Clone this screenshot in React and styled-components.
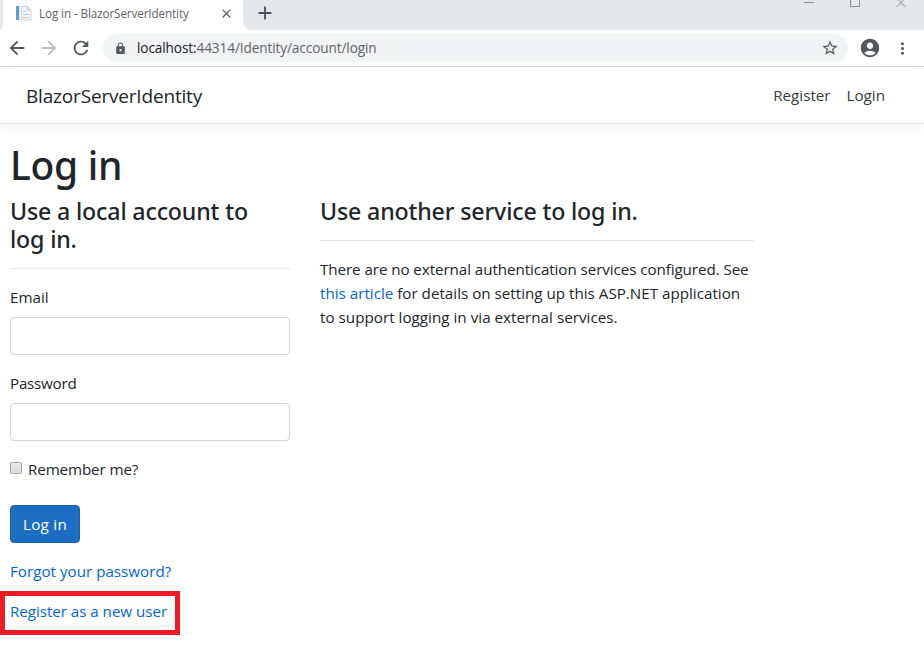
import React from 'react';
import styled, { createGlobalStyle } from 'styled-components';
import {
  MdArrowBack,
  MdArrowForward,
  MdRefresh,
  MdLock,
  MdStarBorder,
  MdAccountCircle,
  MdMoreVert,
  MdClose,
  MdAdd,
} from 'react-icons/md';

const GlobalStyle = createGlobalStyle`
  * { box-sizing: border-box; }
  body {
    margin: 0;
    background: #fff;
    color: #212529;
    font-family: "Open Sans", "Noto Sans", sans-serif;
    font-size: 15.2px;
    line-height: 24px;
    overflow: hidden;
  }
  svg { display: block; flex: none; }
`;

const Window = styled.div`
  display: flex;
  flex-direction: column;
  width: 924px;
  height: 649px;
  overflow: hidden;
`;

const TabStrip = styled.div`
  display: flex;
  height: 30px;
  background: #e4e8eb;
`;

const TabEdge = styled.div`
  width: ${(p) => (p.$side === 'left' ? 3 : 8)}px;
  background: #fff;

  &::after {
    content: '';
    display: block;
    height: 100%;
    background: #e4e8eb;
    border-radius: ${(p) => (p.$side === 'left' ? '0 0 3px 0 / 0 0 8px 0' : '0 0 0 8px')};
  }
`;

const Tab = styled.div`
  display: flex;
  align-items: center;
  width: 240px;
  padding: 0 9px 4px 12px;
  background: #fff;
  color: #5f6368;
`;

const TabTitle = styled.span`
  flex: 1;
  margin-left: 6px;
  font-size: 11.7px;
  letter-spacing: -0.11px;
  line-height: 16px;
  white-space: nowrap;
`;

const NewTab = styled.div`
  display: flex;
  align-items: center;
  padding: 0 0 4px 3px;
  color: #4d5156;
`;

const WindowControls = styled.div`
  display: flex;
  gap: 36px;
  margin: 0 18px 0 auto;
  height: 8px;
`;

const Toolbar = styled.div`
  display: flex;
  align-items: center;
  height: 37px;
  padding: 0 12px 0 6px;
  border-bottom: 1px solid #d8dadc;
  color: #54585d;
`;

const NavIcon = styled.span`
  width: 32px;
  color: ${(p) => (p.$disabled ? '#babcbe' : '#54585d')};
`;

const AddressBar = styled.div`
  display: flex;
  align-items: center;
  width: 745px;
  height: 28px;
  margin: 0 11px 0 1px;
  padding: 0 9px 0 11px;
  border-radius: 14px;
  background: #f1f3f4;
`;

const Url = styled.span`
  flex: 1;
  margin-left: 10px;
  font-size: 13.6px;
  letter-spacing: -0.1px;
  color: #5f6368;
`;

const Host = styled.span`
  color: #202124;
`;

const MenuIcon = styled.span`
  margin-left: 12px;
`;

const SiteHeader = styled.header`
  display: flex;
  align-items: center;
  height: 57px;
  padding: 0 39px 1px 26px;
  border-bottom: 1px solid #dee2e6;
  box-shadow: 0 4px 12px rgba(0, 0, 0, 0.05);
`;

const Brand = styled.a`
  flex: 1;
  padding-top: 2px;
  font-size: 19px;
  letter-spacing: -0.18px;
`;

const HeaderLink = styled.a`
  margin-left: 16px;
  color: #343a40;
`;

const Main = styled.main`
  padding: 17px 0 0 10px;
`;

const Title = styled.h1`
  margin: 0 0 8px;
  font: 500 39px/48px "Noto Sans", sans-serif;
  letter-spacing: -0.3px;
`;

const Columns = styled.div`
  display: grid;
  grid-template-columns: 280px 434px;
  column-gap: 30px;
`;

const Subtitle = styled.h4`
  margin: 0;
  padding-right: 30px;
  font: 500 23.2px/28px "Noto Sans", sans-serif;
  letter-spacing: -0.17px;
`;

const Rule = styled.hr`
  height: 1px;
  margin: 15px 0 16px;
  border: 0;
  background: #e5e5e5;
`;

const Link = styled.a`
  color: #0366d6;
`;

const Paragraph = styled.p`
  margin: 0;
`;

const Line = styled.span`
  display: block;
  white-space: nowrap;
  letter-spacing: ${(p) => p.$track || 0}px;
`;

const Field = styled.label`
  display: block;
  margin-bottom: 16px;
  letter-spacing: ${(p) => p.$track || 0}px;
`;

const Input = styled.input`
  display: block;
  width: 100%;
  height: 38px;
  margin-top: 8px;
  border: 1px solid #ced4da;
  border-radius: 4px;
`;

const CheckRow = styled.label`
  display: flex;
  align-items: center;
  gap: 6px;
  letter-spacing: -0.12px;
`;

const Checkbox = styled.input`
  appearance: none;
  width: 12px;
  height: 12px;
  margin: 0 0 2px;
  border: 1px solid #a6a6a6;
  border-radius: 2px;
  background: linear-gradient(#e9e9e9, #dcdcdc);
`;

const SubmitButton = styled.button`
  display: block;
  width: 70px;
  height: 38px;
  margin: 24px 0 16px;
  padding: 0;
  border: 1px solid #1861ac;
  border-radius: 4px;
  background: #1b6ec2;
  color: #fff;
  font: inherit;
  letter-spacing: 0.25px;
`;

const LinkItem = styled.p`
  position: relative;
  margin: 0 0 16px;
  letter-spacing: ${(p) => p.$track || 0}px;
`;

const Highlight = styled.span`
  position: absolute;
  left: -10px;
  top: -8px;
  width: 180px;
  height: 44px;
  border: 5px solid #ed1c24;
`;

function Favicon() {
  return (
    <svg width="18" height="18" viewBox="0 0 18 18">
      <rect x="1" y="2" width="3" height="14" fill="#5f9fca" />
      <path d="M4.500 2v14" stroke="#cfe2ef" />
      <path d="M6.500 2.500h6l3.500 3.500v10h-9.500z" fill="#f3f4f6" stroke="#d0d4d8" />
      <path d="M12.500 2.500v3.500h3.500" fill="none" stroke="#bfc4ca" />
      <path d="M8 7.500h3M8 10.500h6M7 13.500h7" stroke="#c3c8ce" />
    </svg>
  );
}

function Controls() {
  const line = { fill: 'none', stroke: '#8b8e91' };
  return (
    <WindowControls>
      <svg width="10" height="8" {...line}><path d="M0 2.500h10" /></svg>
      <svg width="10" height="8" {...line}><path d="M.5-3v9.500h9V-3" /></svg>
      <svg width="10" height="8" {...line}><path d="M0-2.500l9.500 9.500M10-2.500L.5 7" /></svg>
    </WindowControls>
  );
}

export default function App() {
  return (
    <Window>
      <GlobalStyle />
      <TabStrip>
        <TabEdge $side="left" />
        <Tab>
          <Favicon />
          <TabTitle>Log in - BlazorServerIdentity</TabTitle>
          <MdClose size={15} />
        </Tab>
        <TabEdge />
        <NewTab><MdAdd size={22} /></NewTab>
        <Controls />
      </TabStrip>
      <Toolbar>
        <NavIcon><MdArrowBack size={22} /></NavIcon>
        <NavIcon $disabled><MdArrowForward size={22} /></NavIcon>
        <NavIcon><MdRefresh size={22} /></NavIcon>
        <AddressBar>
          <MdLock size={13} />
          <Url><Host>localhost:</Host>44314/Identity/account/login</Url>
          <MdStarBorder size={18} />
        </AddressBar>
        <MdAccountCircle size={22} />
        <MenuIcon><MdMoreVert size={19} /></MenuIcon>
      </Toolbar>
      <SiteHeader>
        <Brand>BlazorServerIdentity</Brand>
        <HeaderLink>Register</HeaderLink>
        <HeaderLink>Login</HeaderLink>
      </SiteHeader>
      <Main>
        <Title>Log in</Title>
        <Columns>
          <section>
            <Subtitle>Use a local account to log in.</Subtitle>
            <Rule />
            <Field>Email<Input /></Field>
            <Field $track={-0.25}>Password<Input type="password" /></Field>
            <CheckRow><Checkbox type="checkbox" />Remember me?</CheckRow>
            <SubmitButton>Log in</SubmitButton>
            <LinkItem><Link>Forgot your password?</Link></LinkItem>
            <LinkItem $track={-0.05}><Link>Register as a new user</Link><Highlight /></LinkItem>
          </section>
          <section>
            <Subtitle>Use another service to log in.</Subtitle>
            <Rule />
            <Paragraph>
              <Line $track={-0.08}>There are no external authentication services configured. See</Line>
              <Line><Link>this article</Link> for details on setting up this ASP.NET application</Line>
              <Line $track={0.02}>to support logging in via external services.</Line>
            </Paragraph>
          </section>
        </Columns>
      </Main>
    </Window>
  );
}
